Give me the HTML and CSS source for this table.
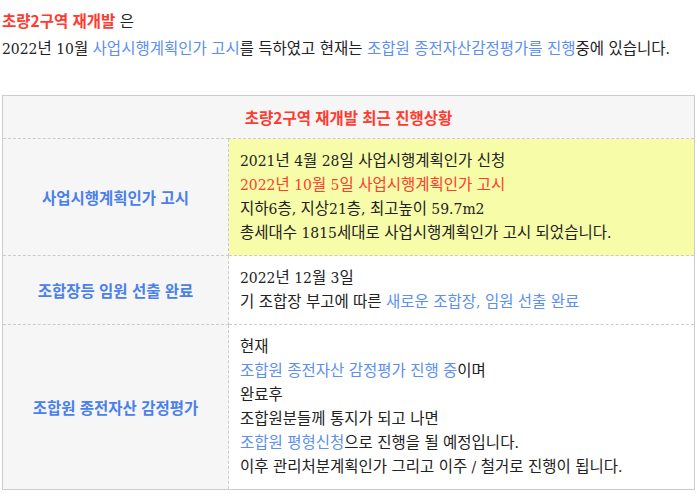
FILE: index.html
```html
<!DOCTYPE html>
<html lang="ko">
<head>
<meta charset="utf-8">
<link rel="stylesheet" href="styles.css">
</head>
<body>
<div class="intro">
  <p class="line"><strong class="red">초량2구역 재개발</strong> 은</p>
  <p class="line">2022년 10월 <span class="blue">사업시행계획인가 고시</span>를 득하였고 현재는 <span class="blue">조합원 종전자산감정평가를 진행</span>중에 있습니다.</p>
</div>
<table class="status">
  <thead>
    <tr><th colspan="2" class="title">초량2구역 재개발 최근 진행상황</th></tr>
  </thead>
  <tbody>
    <tr>
      <th class="label">사업시행계획인가 고시</th>
      <td class="content yellow">
        2021년 4월 28일 사업시행계획인가 신청<br>
        <span class="red">2022년 10월 5일 사업시행계획인가 고시</span><br>
        지하6층, 지상21층, 최고높이 59.7m2<br>
        총세대수 1815세대로 사업시행계획인가 고시 되었습니다.
      </td>
    </tr>
    <tr>
      <th class="label">조합장등 임원 선출 완료</th>
      <td class="content">
        2022년 12월 3일<br>
        기 조합장 부고에 따른 <span class="blue">새로운 조합장, 임원 선출 완료</span>
      </td>
    </tr>
    <tr>
      <th class="label">조합원 종전자산 감정평가</th>
      <td class="content">
        현재<br>
        <span class="blue">조합원 종전자산 감정평가 진행 중</span>이며<br>
        완료후<br>
        조합원분들께 통지가 되고 나면<br>
        <span class="blue">조합원 평형신청</span>으로 진행을 될 예정입니다.<br>
        이후 관리처분계획인가 그리고 이주 / 철거로 진행이 됩니다.
      </td>
    </tr>
  </tbody>
</table>
</body>
</html>
```

FILE: styles.css
```css
html, body {
  margin: 0;
  padding: 0;
  background: #ffffff;
}
body {
  font-family: "DejaVu Serif Condensed", "DejaVu Serif", "Noto Sans CJK KR", serif;
  font-stretch: condensed;
  font-size: 15.5px;
  color: #222222;
  padding: 0 2px;
}
.intro {
  padding-top: 7px;
}
.line {
  margin: 0;
  line-height: 27px;
}
.red {
  color: #ff3b30;
}
.blue {
  color: #5b8ff0;
}
strong.red {
  font-family: "Noto Sans CJK KR", sans-serif;
  font-weight: 700;
}
.status {
  margin-top: 32px;
  width: 693px;
  border-collapse: collapse;
  border: 1px solid #cccccc;
}
.title {
  background: #f6f6f6;
  height: 42px;
  padding: 0;
  text-align: center;
  color: #ff3b30;
  font-family: "Noto Sans CJK KR", sans-serif;
  font-weight: 700;
  font-size: 15.5px;
  border-bottom: 1px dashed #cccccc;
}
.label {
  width: 225px;
  background: #f6f6f6;
  color: #4a80ec;
  font-family: "Noto Sans CJK KR", sans-serif;
  font-weight: 700;
  font-size: 15.5px;
  text-align: center;
  vertical-align: middle;
  border-right: 1px dashed #cccccc;
  border-bottom: 1px dashed #cccccc;
  padding: 0;
}
.content {
  padding: 10px 11px;
  line-height: 24px;
  text-align: left;
  vertical-align: middle;
  border-bottom: 1px dashed #cccccc;
}
.yellow {
  background: #f7fca8;
}
```
